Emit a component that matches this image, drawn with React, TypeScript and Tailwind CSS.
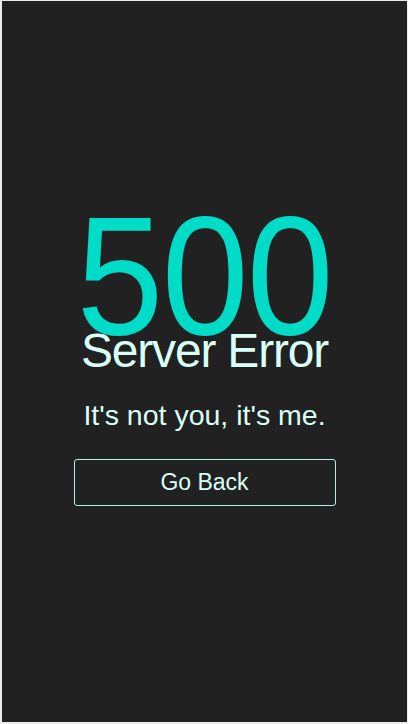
import React from 'react'

const App = () => {
  return (
    <div className="h-[724px] w-[408px] bg-[#ececec] pl-[2px] pt-px pr-px pb-[2px]">
      <main
        className="flex h-full w-full flex-col items-center justify-center bg-[#212121]"
        style={{ fontFamily: '"Liberation Sans", Arial, sans-serif' }}
      >
        {/* Code */}
        <h1 className="text-[168px] leading-[118px] tracking-[-2px] text-[#00dcc8] scale-x-[0.93]">500</h1>
        <h2 className="-mt-[4px] text-[48px] leading-[40px] tracking-[-1.2px] text-[#d9fff8]">Server Error</h2>
        <p className="mt-[28px] text-[28.5px] leading-[32px] text-[#d9fff8]">It's not you, it's me.</p>
        <button className="mt-[28px] h-[47px] w-[262px] rounded-[3px] border-[1.5px] border-[#b0f2e6] text-[23px] text-[#d9fff8]">
          Go Back
        </button>
      </main>
    </div>
  )
}

export default App
